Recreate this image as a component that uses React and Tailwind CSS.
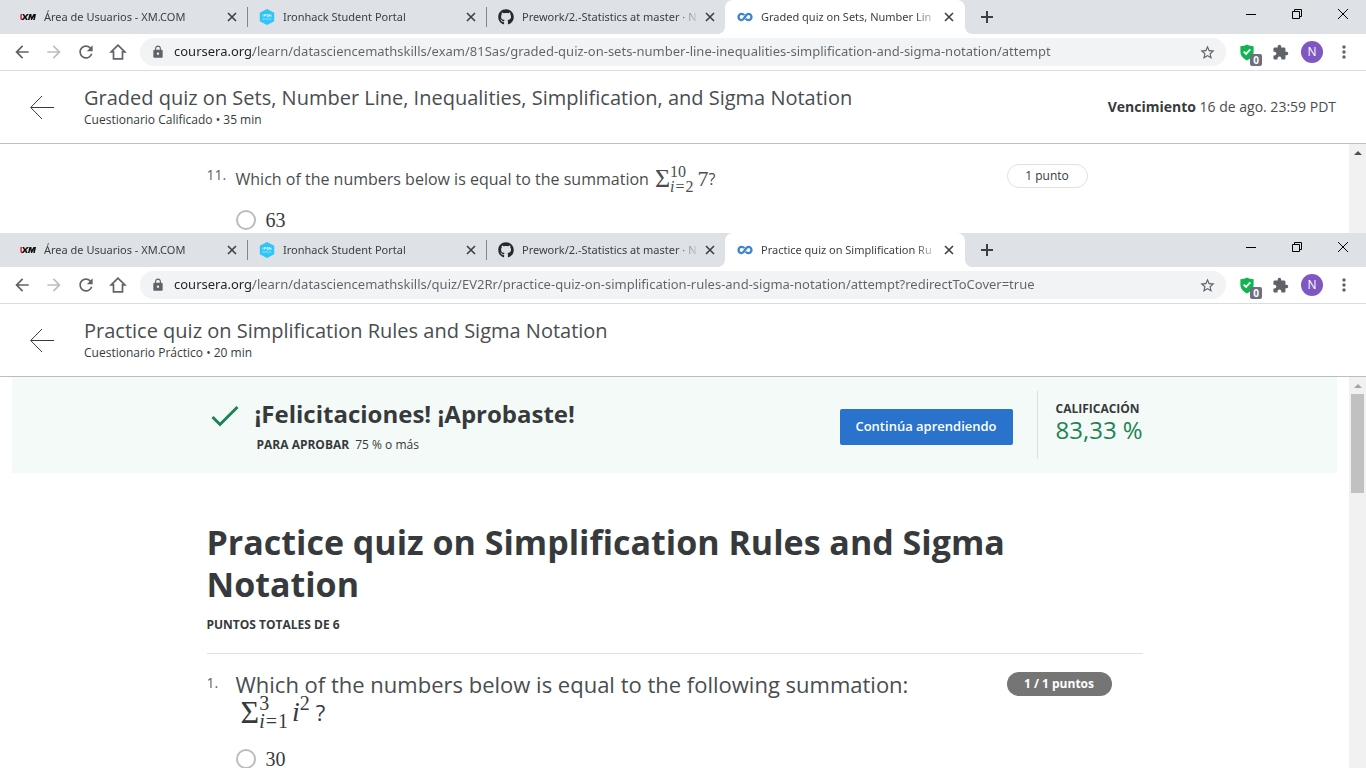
import React from "react";
import {
  MdArrowBack,
  MdArrowForward,
  MdRefresh,
  MdLock,
  MdStarBorder,
  MdExtension,
  MdMoreVert,
} from "react-icons/md";
import { FaGithub } from "react-icons/fa";

function XmIcon() {
  return (
    <svg viewBox="0 0 16 16" className="size-4" aria-hidden="true">
      <path d="M0.5 5h1.800l-.6 2.200.6 3.800H.8L.2 8z" fill="#e02b2b" />
      <path d="M2.300 5h1.800l1 1.900L7 5h2L6.200 8l1.500 3H5.900L5 9.300 3.400 11H1.400l2.600-3z" fill="#111" />
      <path d="M9.400 5h2l.4 3 1.700-3H16l-1.200 6h-1.600l.6-3.600L12 11h-1l-.7-3.600L9.500 11H7.900z" fill="#111" />
    </svg>
  );
}

function IronhackIcon() {
  return (
    <svg viewBox="0 0 16 16" className="size-4" aria-hidden="true">
      <path d="M8 0l7.200 3.800v8.400L8 16 .8 12.200V3.800z" fill="#2dc5fa" />
      <path d="M4 5.500v2M5.500 7.500v-2h1.200v1H5.500M8 5.500h1.300v2H8zM10.600 7.500v-2l1.400 2v-2" stroke="#fff" strokeWidth=".7" fill="none" />
      <path d="M4 9v2M5.200 9v2M4 10h1.200M6.400 11l.6-2 .6 2M10 9H8.800v2H10M11 9v2M12.200 9L11 10l1.200 1" stroke="#a5e8fd" strokeWidth=".5" fill="none" />
    </svg>
  );
}

function CourseraIcon() {
  return (
    <svg viewBox="0 0 16 16" className="size-4" aria-hidden="true">
      <path
        d="M7.300 6.100C6.600 5.300 5.700 4.900 4.600 4.900a3.100 3.100 0 1 0 0 6.200C7.800 11.100 8 4.900 11.400 4.900a3.100 3.100 0 1 1 0 6.200c-1.100 0-2-.5-2.700-1.300"
        fill="none"
        stroke="#3d84cc"
        strokeWidth="2.300"
      />
    </svg>
  );
}

function Tab({ icon, title, active, divider }) {
  return (
    <div
      className={
        "relative flex h-full items-center pl-3 " +
        (active ? "w-[240px] rounded-t-lg bg-white pr-[11px]" : "w-[239px] pr-2.5")
      }
    >
      {active && (
        <>
          <span className="absolute -left-2 bottom-0 size-2 bg-[radial-gradient(circle_at_0_0,#dee1e6_8px,#fff_8px)]" />
          <span className="absolute -right-2 bottom-0 size-2 bg-[radial-gradient(circle_at_100%_0,#dee1e6_8px,#fff_8px)]" />
        </>
      )}
      <a href="#tab" className="flex min-w-0 flex-1 items-center gap-2">
        <span className="shrink-0">{icon}</span>
        <span className="min-w-0 flex-1 overflow-hidden whitespace-nowrap font-['Noto_Sans',sans-serif] text-[11px] leading-5 text-[#3c4043] [mask-image:linear-gradient(90deg,#000_154px,transparent_178px)]">
          {title}
        </span>
      </a>
      <button type="button" aria-label="Cerrar pestaña" className="ml-1 shrink-0">
        <svg viewBox="0 0 10 10" className="size-2.5" aria-hidden="true">
          <path d="M1 1l8 8M9 1L1 9" stroke="#3c4043" strokeWidth="1.600" />
        </svg>
      </button>
      {divider && <span className="absolute -right-px top-[7px] h-5 w-px bg-[#80868b]" />}
    </div>
  );
}

function TabStrip({ title }) {
  return (
    <div className="flex h-[34px] bg-[#dee1e6] pl-2">
      <Tab icon={<XmIcon />} title="Área de Usuarios - XM.COM" divider />
      <Tab icon={<IronhackIcon />} title="Ironhack Student Portal" divider />
      <Tab icon={<FaGithub className="size-4 text-[#24292e]" />} title="Prework/2.-Statistics at master · N" />
      <Tab icon={<CourseraIcon />} title={title} active />
      <button type="button" aria-label="Nueva pestaña" className="ml-4 flex items-center">
        <svg viewBox="0 0 12 12" className="size-3" aria-hidden="true">
          <path d="M6 0v12M0 6h12" stroke="#3c4043" strokeWidth="2" />
        </svg>
      </button>
      <div className="ml-auto flex h-7">
        <button type="button" aria-label="Minimizar" className="flex w-[46px] items-center justify-center">
          <svg viewBox="0 0 10 10" className="size-2.5" aria-hidden="true">
            <path d="M0 5.500h10" stroke="#000" />
          </svg>
        </button>
        <button type="button" aria-label="Restaurar" className="flex w-[46px] items-center justify-center">
          <svg viewBox="0 0 10 10" className="size-2.5" aria-hidden="true">
            <path d="M.5 2.500h7v7h-7zM2.500 2.500v-2h7v7h-2" fill="none" stroke="#000" />
          </svg>
        </button>
        <button type="button" aria-label="Cerrar" className="flex w-[46px] items-center justify-center">
          <svg viewBox="0 0 10 10" className="size-2.5" aria-hidden="true">
            <path d="M0 0l10 10M10 0L0 10" stroke="#000" />
          </svg>
        </button>
      </div>
    </div>
  );
}

function ToolButton({ label, children }) {
  return (
    <button type="button" aria-label={label} className="flex w-8 items-center justify-center text-[#5f6368]">
      {children}
    </button>
  );
}

function Toolbar({ url }) {
  return (
    <div className="flex h-[37px] items-center border-b border-[#dadce0] bg-white px-1.5">
      <ToolButton label="Atrás"><MdArrowBack className="size-5" /></ToolButton>
      <button type="button" aria-label="Adelante" className="flex w-8 items-center justify-center text-[#bcbec1]">
        <MdArrowForward className="size-5" />
      </button>
      <ToolButton label="Recargar"><MdRefresh className="size-5" /></ToolButton>
      <ToolButton label="Inicio">
        <svg viewBox="0 0 20 20" className="size-5" aria-hidden="true">
          <path d="M10 3.200L3.200 9.800h2.300v7h9v-7h2.300z" fill="none" stroke="currentColor" strokeWidth="1.700" />
        </svg>
      </ToolButton>
      <div className="mx-1.5 flex h-7 min-w-0 flex-1 items-center rounded-full bg-[#f1f3f4] pl-[11px] pr-2.5">
        <MdLock className="size-[14px] shrink-0 text-[#5f6368]" />
        <input
          type="text"
          aria-label="Dirección"
          defaultValue={url}
          className="ml-[9px] min-w-0 flex-1 bg-[linear-gradient(90deg,#202124_79px,#5f6368_79px)] bg-clip-text font-['Noto_Sans',sans-serif] text-[13px] text-transparent outline-none"
        />
        <button type="button" aria-label="Añadir a marcadores" className="text-[#5f6368]">
          <MdStarBorder className="size-[17px]" />
        </button>
      </div>
      <button type="button" aria-label="Protección" className="relative flex w-8 justify-center pr-0.5">
        <svg viewBox="0 0 16 18" className="h-[17px] w-4" aria-hidden="true">
          <path d="M8 .5C10 1.800 12.500 2.300 15 2.300V8c0 4.500-3 7.500-7 9.500C4 15.500 1 12.500 1 8V2.300C3.500 2.300 6 1.800 8 .5z" fill="#12b452" />
          <path d="M4.500 8l2.500 2.500 4.500-4.700" stroke="#fff" strokeWidth="1.900" fill="none" />
        </svg>
        <span className="absolute left-[18px] top-2.5 flex h-3 w-3 items-center justify-center rounded-xs bg-[#6e6e7d] text-[10px] font-bold leading-3 text-white">
          0
        </span>
      </button>
      <ToolButton label="Extensiones"><MdExtension className="size-[17px]" /></ToolButton>
      <button type="button" aria-label="Perfil" className="flex w-8 justify-center">
        <span className="flex size-[22px] items-center justify-center rounded-full bg-[#7e57c2] text-xs text-white">N</span>
      </button>
      <ToolButton label="Menú"><MdMoreVert className="size-5" /></ToolButton>
    </div>
  );
}

function QuizHeader({ title, meta, children }) {
  return (
    <header className="flex h-[73px] items-center border-b border-[#bdbdbd] bg-white px-[30px]">
      <a href="#volver" aria-label="Volver">
        <svg viewBox="0 0 24 24" className="size-6" aria-hidden="true">
          <path d="M24 12.500H1M12 1L.7 12.500 12 24" fill="none" stroke="#373a3c" />
        </svg>
      </a>
      <div className="ml-[30px] pt-0.5">
        <h2 className="text-xl leading-6 text-[#4a4d4f]">{title}</h2>
        <p className="text-xs leading-5">{meta}</p>
      </div>
      <div className="ml-auto text-sm text-[#4a4d4f]">{children}</div>
    </header>
  );
}

function Scrollbar({ thumb }) {
  return (
    <div className="flex w-[17px] shrink-0 flex-col items-center bg-[#f1f1f1]" aria-hidden="true">
      <div className="flex h-[17px] items-center">
        <svg viewBox="0 0 8 4" className="h-1 w-2">
          <path d="M4 0l4 4H0z" fill={thumb ? "#a3a3a3" : "#505050"} />
        </svg>
      </div>
      {thumb && <div className="h-[99px] w-[13px] bg-[#c1c1c1]" />}
    </div>
  );
}

function Question({ number, badge, text, children }) {
  return (
    <section className="flex">
      <span className="w-[29px] shrink-0 text-sm leading-[22px] text-[#5c5f61]">{number}</span>
      <div className="min-w-0 flex-1 pr-8">
        {text}
        {children}
      </div>
      <div className="w-[136px] shrink-0">{badge}</div>
    </section>
  );
}

function Option({ name, value }) {
  return (
    <label className="flex items-center gap-2.5">
      <input type="radio" name={name} className="size-5 appearance-none rounded-full border-2 border-[#bdbdbd] bg-white" />
      <span className="font-['Liberation_Serif',serif] text-xl leading-5">{value}</span>
    </label>
  );
}

export default function App() {
  return (
    <div className="flex h-screen flex-col overflow-hidden bg-white font-['Open_Sans',sans-serif] text-[#373a3c]">
      <div className="shrink-0">
        <TabStrip title="Graded quiz on Sets, Number Lin" />
        <Toolbar url="coursera.org/learn/datasciencemathskills/exam/81Sas/graded-quiz-on-sets-number-line-inequalities-simplification-and-sigma-notation/attempt" />
        <QuizHeader
          title="Graded quiz on Sets, Number Line, Inequalities, Simplification, and Sigma Notation"
          meta="Cuestionario Calificado • 35 min"
        >
          <b className="text-[#373a3c]">Vencimiento</b> 16 de ago. 23:59 PDT
        </QuizHeader>
        <div className="flex">
          <main className="min-w-0 flex-1 pb-[3px] pt-5">
            <div className="mx-auto max-w-[936px]">
              <Question
                number="11."
                badge={
                  <span className="flex h-6 w-[81px] items-center justify-center rounded-full border border-[#e1e1e1] text-xs">
                    1 punto
                  </span>
                }
                text={
                  <p className="flex h-[30px] items-center whitespace-nowrap text-base text-[#4a4d4f]">
                    Which of the numbers below is equal to the summation
                    <span className="ml-1.5 inline-flex items-center font-['Liberation_Serif',serif]">
                      <span className="text-[26px] leading-[30px]">Σ</span>
                      <span className="flex flex-col text-base leading-[15px]">
                        <span>10</span>
                        <span className="flex gap-px"><i>i</i>=<span>2</span></span>
                      </span>
                      <span className="ml-1 text-[22px] leading-[30px]">7</span>
                    </span>
                    ?
                  </p>
                }
              >
                <div className="mt-4">
                  <Option name="q11" value="63" />
                </div>
              </Question>
            </div>
          </main>
          <Scrollbar />
        </div>
      </div>

      <div className="flex min-h-0 flex-1 flex-col">
        <div className="shrink-0">
          <TabStrip title="Practice quiz on Simplification Ru" />
          <Toolbar url="coursera.org/learn/datasciencemathskills/quiz/EV2Rr/practice-quiz-on-simplification-rules-and-sigma-notation/attempt?redirectToCover=true" />
          <QuizHeader title="Practice quiz on Simplification Rules and Sigma Notation" meta="Cuestionario Práctico • 20 min" />
        </div>
        <div className="flex min-h-0 flex-1">
          <main className="min-w-0 flex-1 overflow-hidden px-3">
            <div className="bg-[#f4faf8]">
              <div className="mx-auto flex h-24 max-w-[936px] items-center">
                <svg viewBox="0 0 28 22" className="ml-1 mt-7 h-[22px] w-7 shrink-0 self-start" aria-hidden="true">
                  <path d="M1.500 12l7.500 7.500L26.500 2" fill="none" stroke="#1d8354" strokeWidth="3" />
                </svg>
                <div className="ml-4 mt-[3px]">
                  <h3 className="text-2xl leading-8 font-bold">¡Felicitaciones! ¡Aprobaste!</h3>
                  <p className="mt-[5px] pl-0.5 text-xs leading-5">
                    <b className="mr-1.5">PARA APROBAR</b>75 % o más
                  </p>
                </div>
                <button type="button" className="ml-auto mt-1 h-9 w-[173px] rounded-xs bg-[#2a73cc] text-[13px] font-semibold text-white">
                  Continúa aprendiendo
                </button>
                <div className="ml-6 flex h-[68px] w-[106px] flex-col whitespace-nowrap border-l border-[#dcdfde] pl-[18px] pt-2.5">
                  <span className="text-xs leading-4 font-bold">CALIFICACIÓN</span>
                  <span className="text-2xl leading-[26px] text-[#1d8354]">83,33 %</span>
                </div>
              </div>
            </div>
            <div className="mx-auto max-w-[936px]">
              <h1 className="pt-12 text-[34px] leading-[42px] font-bold">
                Practice quiz on Simplification Rules and Sigma Notation
              </h1>
              <p className="mt-2 text-xs leading-6 font-bold">PUNTOS TOTALES DE 6</p>
              <hr className="mb-[18px] mt-4 border-[#e1e1e1]" />
              <Question
                number="1."
                badge={
                  <span className="flex h-6 w-[105px] items-center justify-center rounded-full bg-[#757575] text-xs font-bold text-white">
                    1 / 1 puntos
                  </span>
                }
                text={
                  <p className="text-[22px] leading-6 text-[#4a4d4f]">
                    Which of the numbers below is equal to the following summation:{" "}
                    <span className="inline-flex h-8 items-center pl-[5px] align-top text-[#373a3c]">
                      <span className="inline-flex items-center font-['Liberation_Serif',serif]">
                        <span className="text-[32px] leading-8">Σ</span>
                        <span className="flex flex-col text-xl leading-[18px]">
                          <span>3</span>
                          <span className="flex gap-px"><i>i</i>=<span>1</span></span>
                        </span>
                        <i className="ml-1 text-[28px] leading-8">i</i>
                        <span className="self-start text-xl leading-[18px]">2</span>
                      </span>
                      <span className="ml-1.5">?</span>
                    </span>
                  </p>
                }
              >
                <div className="mt-[21px]">
                  <Option name="q1" value="30" />
                </div>
              </Question>
            </div>
          </main>
          <Scrollbar thumb />
        </div>
      </div>
    </div>
  );
}
